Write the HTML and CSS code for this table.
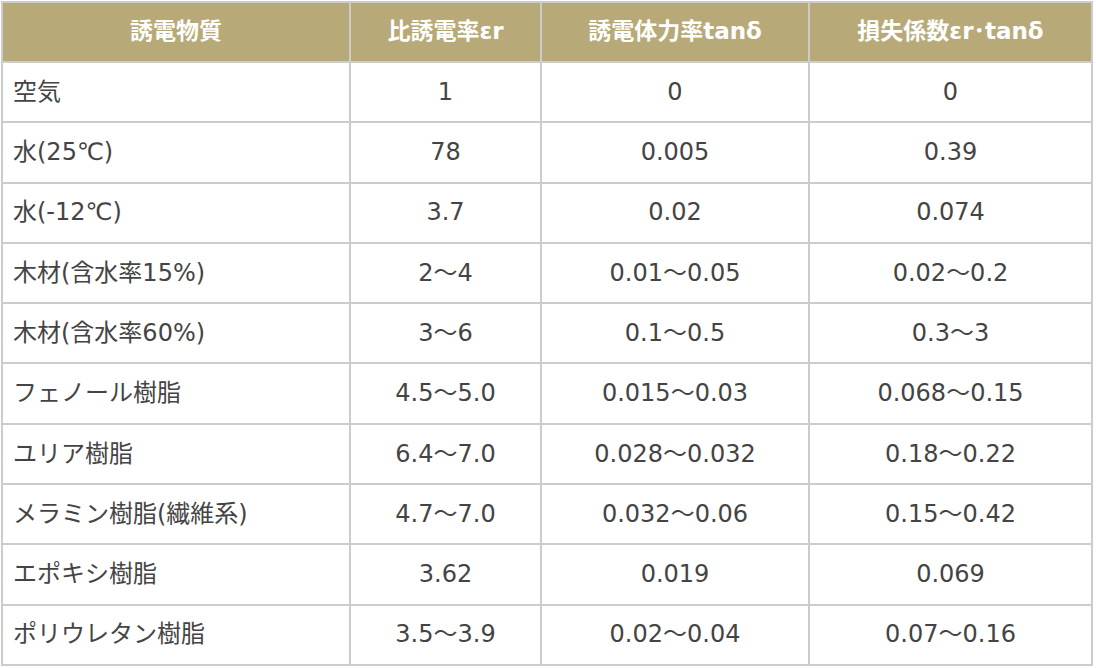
FILE: index.html
```html
<!DOCTYPE html>
<html lang="ja">
<head>
<meta charset="utf-8">
<link rel="stylesheet" href="styles.css">
</head>
<body>
<table class="data">
  <colgroup>
    <col class="c1"><col class="c2"><col class="c3"><col class="c4">
  </colgroup>
  <thead>
    <tr><th>誘電物質</th><th>比誘電率εr</th><th>誘電体力率tanδ</th><th>損失係数εr･tanδ</th></tr>
  </thead>
  <tbody>
    <tr><td>空気</td><td>1</td><td>0</td><td>0</td></tr>
    <tr><td>水(25℃)</td><td>78</td><td>0.005</td><td>0.39</td></tr>
    <tr><td>水(-12℃)</td><td>3.7</td><td>0.02</td><td>0.074</td></tr>
    <tr><td>木材(含水率15%)</td><td>2～4</td><td>0.01～0.05</td><td>0.02～0.2</td></tr>
    <tr><td>木材(含水率60%)</td><td>3～6</td><td>0.1～0.5</td><td>0.3～3</td></tr>
    <tr><td>フェノール樹脂</td><td>4.5～5.0</td><td>0.015～0.03</td><td>0.068～0.15</td></tr>
    <tr><td>ユリア樹脂</td><td>6.4～7.0</td><td>0.028～0.032</td><td>0.18～0.22</td></tr>
    <tr><td>メラミン樹脂(繊維系)</td><td>4.7～7.0</td><td>0.032～0.06</td><td>0.15～0.42</td></tr>
    <tr><td>エポキシ樹脂</td><td>3.62</td><td>0.019</td><td>0.069</td></tr>
    <tr><td>ポリウレタン樹脂</td><td>3.5～3.9</td><td>0.02～0.04</td><td>0.07～0.16</td></tr>
  </tbody>
</table>
</body>
</html>
```
FILE: styles.css
```css
html, body {
  margin: 0;
  padding: 0;
  background: #fff;
}
body {
  padding: 1px;
}
.data {
  border-collapse: separate;
  border-spacing: 0;
  table-layout: fixed;
  width: 1092px;
  border-top: 2px solid #cccccc;
  border-left: 2px solid #cccccc;
  font-family: "DejaVu Sans", Verdana, "Noto Sans CJK JP", sans-serif;
  font-size: 24px;
  color: #444444;
}
.c1 { width: 348px; }
.c2 { width: 191px; }
.c3 { width: 268px; }
.c4 { width: 283px; }
.data th,
.data td {
  border-right: 2px solid #cccccc;
  border-bottom: 2px solid #cccccc;
  padding: 0 10px;
  height: 58.3px;
  box-sizing: border-box;
  vertical-align: middle;
  line-height: 1.2;
}
.data th {
  background: #b8aa78;
  color: #ffffff;
  font-weight: bold;
  font-size: 23px;
  text-align: center;
  height: 58px;
}
.data td {
  text-align: center;
}
.data td:first-child {
  text-align: left;
}
.data tbody tr {
  height: 60.3px;
}
.data thead tr {
  height: 60px;
}
```
